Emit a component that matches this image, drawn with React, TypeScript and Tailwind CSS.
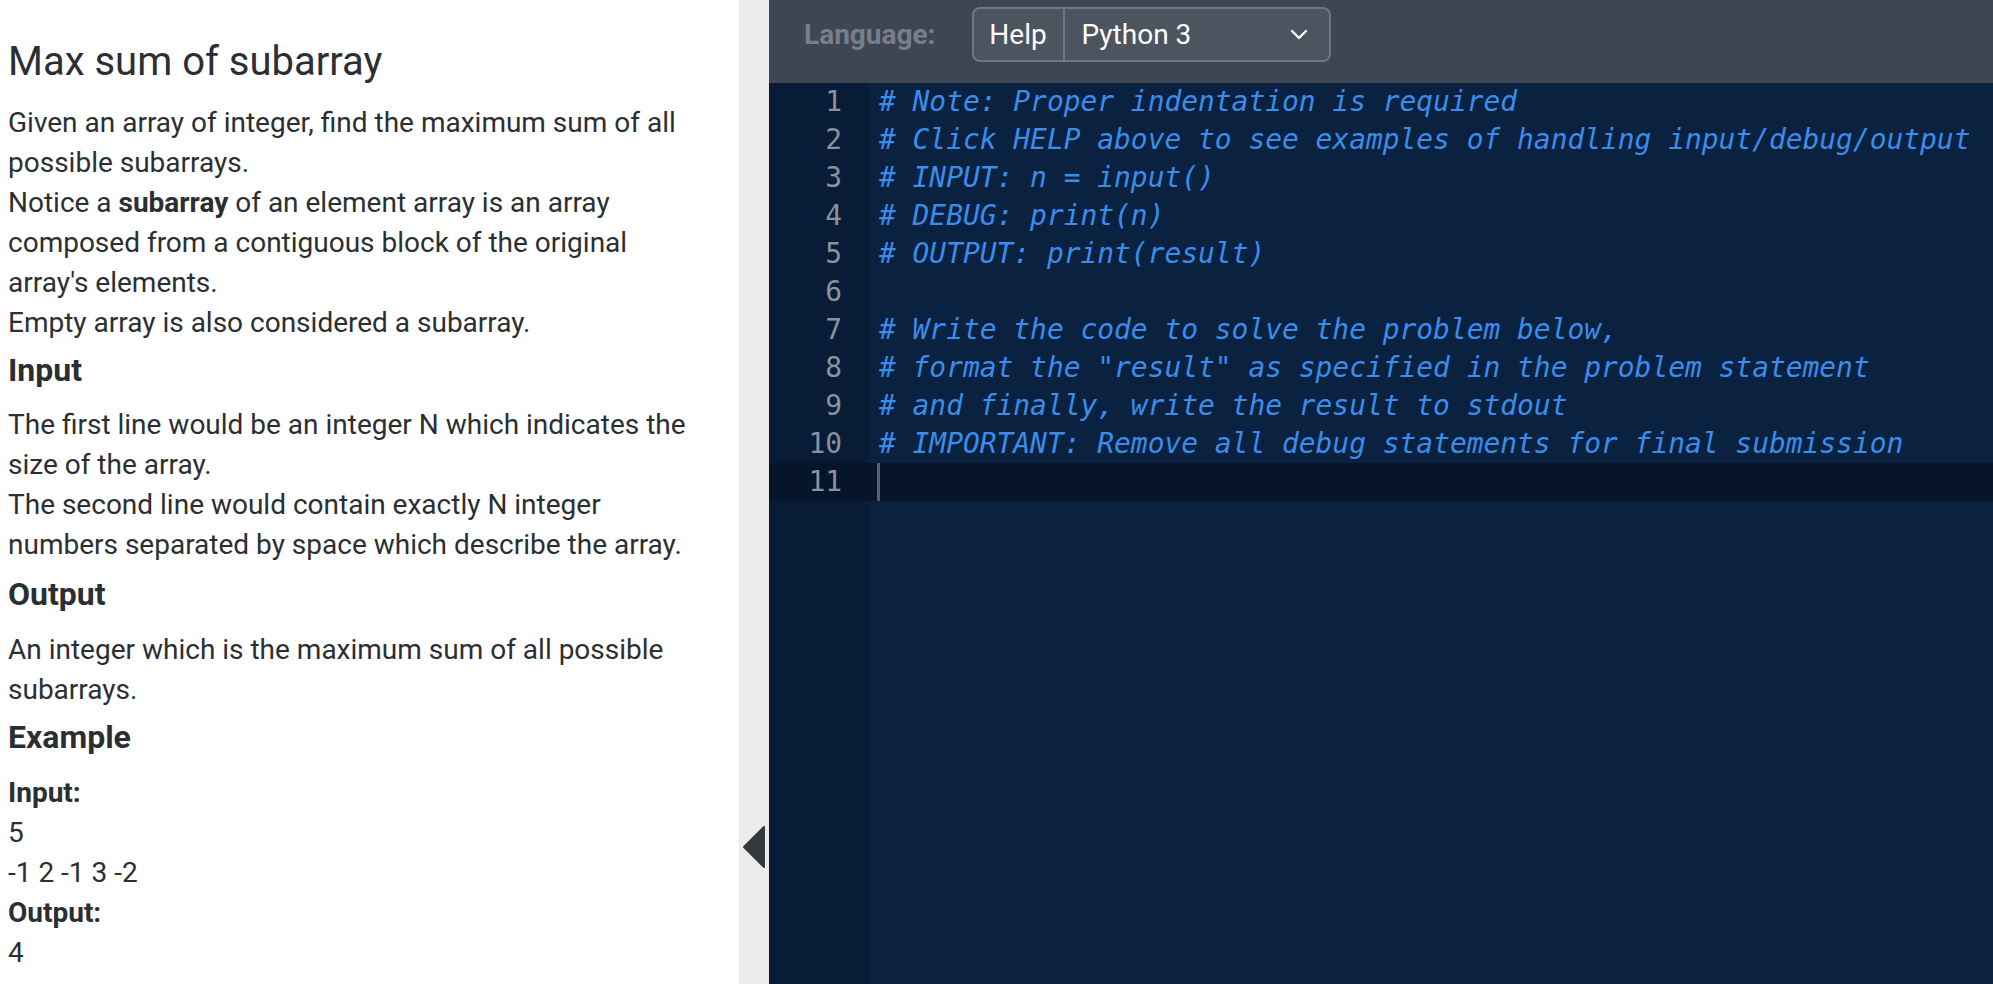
const codeLines = [
  "# Note: Proper indentation is required",
  "# Click HELP above to see examples of handling input/debug/output",
  "# INPUT: n = input()",
  "# DEBUG: print(n)",
  "# OUTPUT: print(result)",
  "",
  "# Write the code to solve the problem below,",
  '# format the "result" as specified in the problem statement',
  "# and finally, write the result to stdout",
  "# IMPORTANT: Remove all debug statements for final submission",
  "",
];

const ACTIVE = 10;

const Problem = () => (
  <div className="w-[739px] shrink-0 bg-white pl-[8px] pr-[38px] pt-[38px] font-['Roboto',sans-serif] text-[#2b2f33]">
    <h1 className="mb-[17px] text-[40px] font-normal leading-[48px]">Max sum of subarray</h1>
    <p className="text-[28px] leading-[40px]">
      Given an array of integer, find the maximum sum of all possible subarrays.
      <br />
      Notice a <b className="font-bold">subarray</b> of an element array is an array composed from a contiguous block of
      the original array's elements.
      <br />
      Empty array is also considered a subarray.
    </p>

    <h2 className="mb-[17px] mt-[9px] text-[32px] font-bold leading-[36px]">Input</h2>
    <p className="text-[28px] leading-[40px]">
      The first line would be an integer N which indicates the size of the array.
      <br />
      The second line would contain exactly N integer numbers separated by space which describe the array.
    </p>

    <h2 className="mb-[18px] mt-[11px] text-[32px] font-bold leading-[36px]">Output</h2>
    <p className="text-[28px] leading-[40px]">An integer which is the maximum sum of all possible subarrays.</p>

    <h2 className="mb-[18px] mt-[9px] text-[32px] font-bold leading-[36px]">Example</h2>
    <div className="text-[28px] leading-[40px]">
      <div className="font-bold">Input:</div>
      <div>5</div>
      <div>-1 2 -1 3 -2</div>
      <div className="font-bold">Output:</div>
      <div>4</div>
    </div>
  </div>
);

const Splitter = () => (
  <div className="relative w-[30px] shrink-0 bg-[#ebebeb]">
    {/* collapse toggle */}
    <button className="absolute left-[3px] top-[825px]">
      <svg width="24" height="44" viewBox="0 0 24 44">
        <path d="M22 2 L2 22 L22 42 Z" fill="#34373c" stroke="#34373c" strokeWidth="2" strokeLinejoin="round" />
      </svg>
    </button>
  </div>
);

const Toolbar = () => (
  <div className="flex h-[83px] shrink-0 items-start bg-[#3f4653] pl-[35px] pt-[7px] font-['Roboto',sans-serif]">
    <div className="flex h-[55px] items-center">
      <span className="text-[28px] font-bold text-[#787f88]">Language:</span>
    </div>
    <div className="ml-[36px] flex h-[55px]">
      <button className="h-full w-[93px] rounded-l-[8px] border-2 border-[#6f7782] bg-[#4c5460] text-[28px] text-white">
        Help
      </button>
      <div className="-ml-[2px] flex h-full w-[268px] items-center justify-between rounded-r-[8px] border-2 border-[#6f7782] bg-[#4c5460] pl-[17px] pr-[21px]">
        <span className="text-[28px] text-white">Python 3</span>
        <svg width="18" height="11" viewBox="0 0 18 11">
          <path d="M2 2 L9 9 L16 2" fill="none" stroke="white" strokeWidth="2.4" strokeLinecap="round" strokeLinejoin="round" />
        </svg>
      </div>
    </div>
  </div>
);

const Editor = () => (
  <div className="flex flex-1 bg-[#0a2240] font-['DejaVu_Sans_Mono',monospace] text-[27.9px] leading-[38px]">
    <div className="w-[100px] shrink-0 bg-[#081c37]">
      {codeLines.map((_, i) => (
        <div
          key={i}
          className={`h-[38px] pr-[27px] text-right text-[#8a929b] ${i === ACTIVE ? "bg-[#061529]" : ""}`}
        >
          {i + 1}
        </div>
      ))}
    </div>
    <div className="flex-1">
      {codeLines.map((line, i) => (
        <div
          key={i}
          className={`relative h-[38px] whitespace-pre pl-[10px] italic text-[#3b8ceb] ${i === ACTIVE ? "bg-[#061529]" : ""}`}
        >
          {line}
          {i === ACTIVE && <span className="absolute left-[8px] top-0 h-[38px] w-[3px] bg-[#56606c]" />}
        </div>
      ))}
    </div>
  </div>
);

export default function App() {
  return (
    <div className="flex h-[984px] w-full overflow-hidden">
      <Problem />
      <Splitter />
      <div className="flex min-w-0 flex-1 flex-col">
        <Toolbar />
        <Editor />
      </div>
    </div>
  );
}
